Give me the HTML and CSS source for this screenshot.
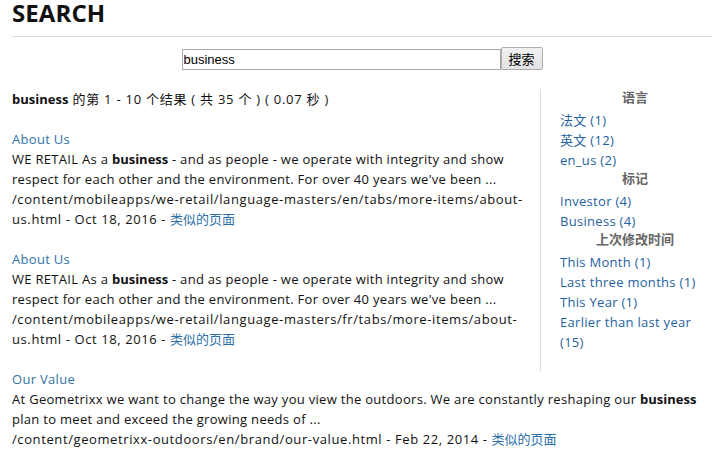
FILE: index.html
```html
<!DOCTYPE html>
<html lang="zh">
<head>
<meta charset="utf-8">
<title>Search</title>
<link rel="stylesheet" href="styles.css">
</head>
<body>
<div class="page">
  <header class="header">
    <h1 class="title">SEARCH</h1>
  </header>
  <form class="search">
    <input class="search-input" type="text" value="business">
    <button class="search-btn" type="button">搜索</button>
  </form>
  <div class="content">
    <aside class="facets">
      <h3 class="facet-title">语言</h3>
      <ul class="facet-list">
        <li><a href="#">法文 (1)</a></li>
        <li><a href="#">英文 (12)</a></li>
        <li><a href="#">en_us (2)</a></li>
      </ul>
      <h3 class="facet-title">标记</h3>
      <ul class="facet-list">
        <li><a href="#">Investor (4)</a></li>
        <li><a href="#">Business (4)</a></li>
      </ul>
      <h3 class="facet-title">上次修改时间</h3>
      <ul class="facet-list">
        <li><a href="#">This Month (1)</a></li>
        <li><a href="#">Last three months (1)</a></li>
        <li><a href="#">This Year (1)</a></li>
        <li><a href="#">Earlier than last year (15)</a></li>
      </ul>
    </aside>
    <p class="summary"><b>business</b> 的第 1 - 10 个结果 ( 共 35 个 ) ( 0.07 秒 )</p>
    <div class="result">
      <a class="result-title" href="#">About Us</a>
      <div class="result-text">WE RETAIL As a <b>business</b> - and as people - we operate with integrity and show respect for each other and the environment. For over 40 years we've been ...</div>
      <div class="result-meta">/content/mobileapps/we-retail/language-masters/en/tabs/more-items/about-us.html - Oct 18, 2016 - <a href="#">类似的页面</a></div>
    </div>
    <div class="result">
      <a class="result-title" href="#">About Us</a>
      <div class="result-text">WE RETAIL As a <b>business</b> - and as people - we operate with integrity and show respect for each other and the environment. For over 40 years we've been ...</div>
      <div class="result-meta">/content/mobileapps/we-retail/language-masters/fr/tabs/more-items/about-us.html - Oct 18, 2016 - <a href="#">类似的页面</a></div>
    </div>
    <div class="result">
      <a class="result-title" href="#">Our Value</a>
      <div class="result-text">At Geometrixx we want to change the way you view the outdoors. We are constantly reshaping our <b>business</b> plan to meet and exceed the growing needs of ...</div>
      <div class="result-meta">/content/geometrixx-outdoors/en/brand/our-value.html - Feb 22, 2014 - <a href="#">类似的页面</a></div>
    </div>
  </div>
</div>
</body>
</html>
```
FILE: styles.css
```css
html, body {
  margin: 0;
  padding: 0;
  background: #fff;
}
body {
  font-family: "Open Sans", "Noto Sans CJK SC", sans-serif;
  font-size: 13px;
  line-height: 20px;
  letter-spacing: 0.3px;
  color: #111;
}
.page {
  padding-left: 12px;
}
.header {
  border-bottom: 1px solid #dcdcdc;
  height: 36px;
}
.title {
  margin: 0;
  font-family: "Open Sans", sans-serif;
  font-size: 24px;
  line-height: 26px;
  font-weight: 700;
  letter-spacing: 0.1px;
  color: #111;
}
.search {
  display: flex;
  justify-content: center;
  align-items: flex-end;
  margin: 0;
  padding-top: 10px;
  height: 23px;
}
.search-input {
  box-sizing: border-box;
  width: 319px;
  height: 21px;
  margin: 0;
  padding: 0 1px;
  border: 1px solid #a9a9a9;
  font-family: "Liberation Sans", Arial, sans-serif;
  font-size: 13px;
  letter-spacing: 0;
  color: #000;
}
.search-btn {
  box-sizing: border-box;
  width: 42px;
  height: 23px;
  margin: 0;
  padding: 0;
  border: 1px solid #adadad;
  border-radius: 2px;
  background: linear-gradient(#f2f2f2, #e2e2e2);
  font-family: "Noto Sans CJK SC", sans-serif;
  font-size: 13px;
  line-height: 20px;
  letter-spacing: 0;
  color: #000;
}
.content {
  padding-top: 19px;
}
.facets {
  float: right;
  width: 150px;
  margin: 0 2px 0 15px;
  padding: 0 0 20px 19px;
  border-left: 1px solid #dcdcdc;
}
.facet-title {
  margin: 0 0 5px;
  text-align: center;
  font-size: 13px;
  line-height: 16px;
  font-weight: 700;
  letter-spacing: 0;
  color: #666;
}
.facet-list {
  list-style: none;
  margin: 0;
  padding: 0;
}
.facet-list a {
  color: #1f62a0;
  text-decoration: none;
}
.summary {
  margin: 0 0 20px;
  letter-spacing: 0.75px;
}
.result {
  margin-bottom: 20px;
}
.result-title {
  display: block;
  color: #3373a6;
  text-decoration: none;
}
.result-meta {
  letter-spacing: 0.6px;
}
.result-meta a {
  color: #2c6fa8;
  text-decoration: none;
  letter-spacing: 0;
}
b {
  font-weight: 700;
  letter-spacing: 0;
}
```
